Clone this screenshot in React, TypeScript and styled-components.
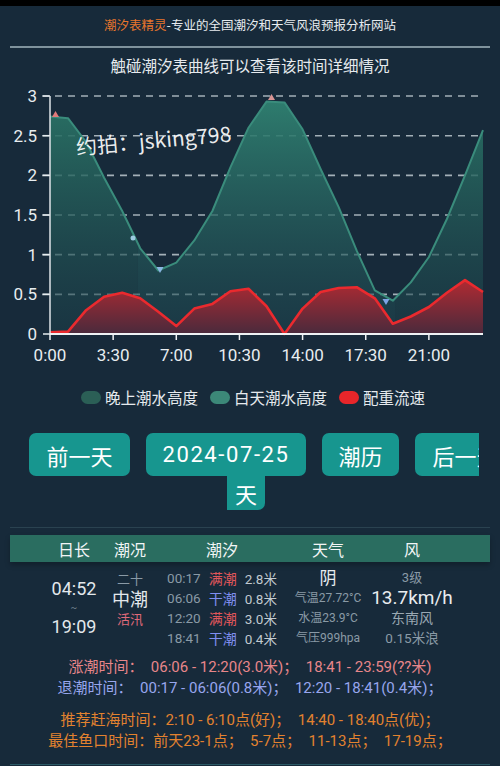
import React from "react";
import styled, { createGlobalStyle } from "styled-components";

const GlobalStyle = createGlobalStyle`
  html, body {
    margin: 0;
    padding: 0;
    background: #172a3a;
  }
  body {
    font-family: Roboto, "Noto Sans CJK SC", sans-serif;
  }
`;

// STYLED COMPONENTS
const Page = styled.div`
  width: 500px;
  height: 766px;
  overflow: hidden;
  background: #172a3a;
  color: #e3e8ec;
  display: flex;
  flex-direction: column;
`;

const TopStrip = styled.div`
  height: 6px;
  flex-shrink: 0;
  background: #000;
`;

const SiteHeader = styled.div`
  height: 38px;
  line-height: 38px;
  text-align: center;
  font-size: 12.5px;
  color: #e8ecef;
  font-family: "Noto Sans CJK SC", sans-serif;

  span {
    color: #e8762c;
  }
`;

const Divider = styled.div`
  height: 2px;
  margin: 2px 10px 0;
  background: #7f929c;
`;

const ChartTitle = styled.div`
  height: 34px;
  line-height: 34px;
  text-align: center;
  font-size: 15.5px;
  color: #e6eaee;
  font-family: "Noto Sans CJK SC", sans-serif;
`;

const ChartWrap = styled.div`
  position: relative;
  height: 288px;
`;

const Watermark = styled.div`
  position: absolute;
  left: 76px;
  top: 49px;
  font-size: 21px;
  color: rgba(255, 255, 255, 0.92);
  transform: rotate(-5deg);
  transform-origin: left center;
  font-family: "Noto Sans CJK SC", sans-serif;
  white-space: nowrap;
`;

const Legend = styled.div`
  margin-top: 15px;
  height: 24px;
  display: flex;
  justify-content: center;
  align-items: center;
  gap: 12px;
  padding-left: 6px;
`;

const LegendItem = styled.div`
  display: flex;
  align-items: center;
  gap: 4px;
  font-size: 15.5px;
  color: #e6eaee;
  font-family: "Noto Sans CJK SC", sans-serif;
`;

const Swatch = styled.span<{ $color: string }>`
  width: 20px;
  height: 13px;
  border-radius: 7px;
  background: ${(p) => p.$color};
`;

const ButtonRow = styled.div`
  margin-top: 24px;
  width: 479px;
  overflow: hidden;
  display: flex;
  align-items: flex-start;
  gap: 16px;
  padding-left: 29px;
  box-sizing: border-box;
`;

const NavButton = styled.div<{ $w: number; $spacing?: number }>`
  flex-shrink: 0;
  width: ${(p) => p.$w}px;
  height: 43px;
  border-radius: 7px;
  background: #17968f;
  color: #fff;
  font-size: 22px;
  letter-spacing: ${(p) => p.$spacing ?? 0}px;
  display: flex;
  align-items: center;
  justify-content: center;
  font-family: Roboto, "Noto Sans CJK SC", sans-serif;
`;

const DateGroup = styled.div`
  flex-shrink: 0;
  display: flex;
  flex-direction: column;
`;

const DateTail = styled.div`
  margin-left: 81px;
  width: 38px;
  height: 34px;
  background: #17968f;
  border-radius: 0 0 7px 0;
  color: #fff;
  font-size: 22px;
  display: flex;
  align-items: center;
  justify-content: center;
  font-family: "Noto Sans CJK SC", sans-serif;
`;

const FaintLine = styled.div`
  margin: 17px 10px 0;
  height: 1px;
  background: #2a4250;
`;

const cols = "72px 40px 144px 68px 100px";

const TableHead = styled.div`
  margin: 7px 10px 0;
  height: 27px;
  padding-left: 28px;
  background: #2a6d60;
  display: grid;
  grid-template-columns: ${cols};
  align-items: center;
  box-shadow: 0 3px 5px rgba(0, 0, 0, 0.25);
  font-size: 16px;
  color: #f2f5f6;
  font-family: "Noto Sans CJK SC", sans-serif;

  div {
    text-align: center;
  }
`;

const TableBody = styled.div`
  margin: 6px 10px 0;
  height: 80px;
  padding-left: 28px;
  display: grid;
  grid-template-columns: ${cols};
`;

const Cell = styled.div<{ $center?: boolean; $pad?: number }>`
  display: flex;
  flex-direction: column;
  align-items: center;
  padding-top: ${(p) => p.$pad ?? 0}px;
  justify-content: ${(p) => (p.$center ? "center" : "flex-start")};
`;

const Line = styled.div<{ $size?: number; $color?: string; $h?: number }>`
  height: ${(p) => p.$h ?? 20}px;
  line-height: ${(p) => p.$h ?? 20}px;
  font-size: ${(p) => p.$size ?? 13}px;
  color: ${(p) => p.$color ?? "#8a9aa6"};
  white-space: nowrap;
`;

const TideRow = styled.div`
  height: 20px;
  display: flex;
  align-items: center;
  gap: 8px;
  white-space: nowrap;
`;

const TideTime = styled.span`
  font-size: 13.5px;
  color: #8a9aa6;
`;

const TideKind = styled.span<{ $high: boolean }>`
  font-size: 14px;
  color: ${(p) => (p.$high ? "#e0565a" : "#7f8ef0")};
`;

const TideValue = styled.span`
  font-size: 13.5px;
  color: #c0c9cf;
`;

const InfoBlock = styled.div<{ $top: number }>`
  margin-top: ${(p) => p.$top}px;
  display: flex;
  flex-direction: column;
  align-items: center;
`;

const InfoLine = styled.div<{ $color: string }>`
  height: 21px;
  line-height: 21px;
  font-size: 15px;
  color: ${(p) => p.$color};
  white-space: pre;
`;

const BottomLine = styled.div`
  margin: 12px 10px 0;
  height: 1px;
  background: #2c5a66;
`;

// CHART DATA
const tide = [
  2.74, 2.72, 2.42, 1.97, 1.55, 1.08, 0.8, 0.9, 1.18, 1.55, 2.1, 2.6, 2.93,
  2.92, 2.58, 2.08, 1.6, 1.05, 0.55, 0.42, 0.65, 0.97, 1.45, 2.0, 2.57,
];
const flow = [
  0.02, 0.03, 0.3, 0.47, 0.52, 0.45, 0.28, 0.1, 0.32, 0.38, 0.54, 0.57, 0.35,
  0.0, 0.32, 0.53, 0.58, 0.59, 0.45, 0.13, 0.22, 0.34, 0.52, 0.68, 0.53,
];

const X0 = 50;
const X1 = 483;
const Y0 = 334;
const UNIT = 79.33;
const px = (h: number) => X0 + ((X1 - X0) / 24) * h;
const py = (v: number) => Y0 - v * UNIT;

const linePath = (vals: number[]) =>
  vals.map((v, i) => `${i ? "L" : "M"}${px(i).toFixed(1)},${py(v).toFixed(1)}`).join(" ");
const areaPath = (vals: number[]) => `${linePath(vals)} L${X1},${Y0} L${X0},${Y0} Z`;

const xLabels = ["0:00", "3:30", "7:00", "10:30", "14:00", "17:30", "21:00"];
const yLabels = ["0", "0.5", "1", "1.5", "2", "2.5", "3"];

function TideChart() {
  const sunrise = px(4 + 52 / 60);
  const sunset = px(19 + 9 / 60);
  return (
    <svg width="500" height="288" viewBox="0 82 500 288" style={{ display: "block" }}>
      <defs>
        <linearGradient id="dayFill" x1="0" y1="0" x2="0" y2="1">
          <stop offset="0" stopColor="#2f8070" stopOpacity="0.95" />
          <stop offset="1" stopColor="#1e4650" stopOpacity="0.5" />
        </linearGradient>
        <linearGradient id="nightFill" x1="0" y1="0" x2="0" y2="1">
          <stop offset="0" stopColor="#2a7466" stopOpacity="0.95" />
          <stop offset="1" stopColor="#1c404a" stopOpacity="0.5" />
        </linearGradient>
        <linearGradient id="flowFill" x1="0" y1="270" x2="0" y2="334" gradientUnits="userSpaceOnUse">
          <stop offset="0" stopColor="#c42a30" />
          <stop offset="1" stopColor="#4a2a3c" />
        </linearGradient>
        <clipPath id="dayClip">
          <rect x={sunrise} y="80" width={sunset - sunrise} height="260" />
        </clipPath>
        <clipPath id="nightClip">
          <rect x="40" y="80" width={sunrise - 40} height="260" />
          <rect x={sunset} y="80" width={500 - sunset} height="260" />
        </clipPath>
      </defs>

      {yLabels.map((l, i) => {
        const y = py(i * 0.5);
        return (
          <g key={l}>
            {i > 0 && (
              <line x1="42" x2={X1} y1={y} y2={y} stroke="#c8d2d8" strokeWidth="1.6" strokeDasharray="7 6" opacity="0.8" />
            )}
            <line x1="43" x2={X0} y1={y} y2={y} stroke="#e6ecef" strokeWidth="1.5" />
            <text x="37" y={y + 6} textAnchor="end" fontSize="17" fill="#e8edf0" fontFamily="Roboto, sans-serif">
              {l}
            </text>
          </g>
        );
      })}

      <path d={areaPath(tide)} fill="url(#dayFill)" clipPath="url(#dayClip)" />
      <path d={areaPath(tide)} fill="url(#nightFill)" clipPath="url(#nightClip)" />
      <path d={linePath(tide)} fill="none" stroke="#3a8c7c" strokeWidth="2" strokeLinejoin="round" />

      <path d={areaPath(flow)} fill="url(#flowFill)" />
      <path d={linePath(flow)} fill="none" stroke="#ea2a2e" strokeWidth="2.6" strokeLinejoin="round" />

      <line x1={X0} x2={X0} y1={py(3)} y2={Y0} stroke="#dfe5e9" strokeWidth="1.5" />
      <line x1={X0} x2={X1} y1={Y0} y2={Y0} stroke="#eef2f4" strokeWidth="2" />

      {xLabels.map((l, i) => {
        const x = px(i * 3.5);
        return (
          <g key={l}>
            <line x1={x} x2={x} y1={Y0} y2={Y0 + 6} stroke="#eef2f4" strokeWidth="1.5" />
            <text x={x} y="361" textAnchor="middle" fontSize="17" fill="#e8edf0" fontFamily="Roboto, sans-serif">
              {l}
            </text>
          </g>
        );
      })}

      <polygon points="52,117 55.5,111 59,117" fill="#e07a7a" />
      <polygon points="268,100 271.5,94 275,100" fill="#d89494" />
      <polygon points="156.5,267 163.5,267 160,273" fill="#8ab6e2" />
      <polygon points="382.5,299 389.5,299 386,305" fill="#7ea4e4" />
      <circle cx="133" cy="238" r="2.5" fill="#9ccae2" />
    </svg>
  );
}

const tides = [
  { time: "00:17", high: true, value: "2.8米" },
  { time: "06:06", high: false, value: "0.8米" },
  { time: "12:20", high: true, value: "3.0米" },
  { time: "18:41", high: false, value: "0.4米" },
];

export default function App() {
  return (
    <Page>
      <GlobalStyle />
      <TopStrip />
      <SiteHeader>
        <span>潮汐表精灵</span>-专业的全国潮汐和天气风浪预报分析网站
      </SiteHeader>
      <Divider />
      <ChartTitle>触碰潮汐表曲线可以查看该时间详细情况</ChartTitle>

      <ChartWrap>
        <TideChart />
        <Watermark>约拍：jsking798</Watermark>
      </ChartWrap>

      <Legend>
        <LegendItem>
          <Swatch $color="#2b5f56" />
          晚上潮水高度
        </LegendItem>
        <LegendItem>
          <Swatch $color="#3c8878" />
          白天潮水高度
        </LegendItem>
        <LegendItem>
          <Swatch $color="#e8262a" />
          配重流速
        </LegendItem>
      </Legend>

      <ButtonRow>
        <NavButton $w={101}>前一天</NavButton>
        <DateGroup>
          <NavButton $w={160} $spacing={1.6}>2024-07-25</NavButton>
          <DateTail>天</DateTail>
        </DateGroup>
        <NavButton $w={77}>潮历</NavButton>
        <NavButton $w={101}>后一天</NavButton>
      </ButtonRow>

      <FaintLine />

      <TableHead>
        <div>日长</div>
        <div>潮况</div>
        <div>潮汐</div>
        <div>天气</div>
        <div>风</div>
      </TableHead>

      <TableBody>
        <Cell $center>
          <Line $size={18} $h={22} $color="#e3e8ec">04:52</Line>
          <Line $size={10} $h={16} $color="#6f808c">~</Line>
          <Line $size={18} $h={22} $color="#e3e8ec">19:09</Line>
        </Cell>
        <Cell $pad={2}>
          <Line $size={13}>二十</Line>
          <Line $size={18} $color="#e3e8ec">中潮</Line>
          <Line $size={13} $color="#e06a7a">活汛</Line>
        </Cell>
        <Cell>
          {tides.map((t) => (
            <TideRow key={t.time}>
              <TideTime>{t.time}</TideTime>
              <TideKind $high={t.high}>{t.high ? "满潮" : "干潮"}</TideKind>
              <TideValue>{t.value}</TideValue>
            </TideRow>
          ))}
        </Cell>
        <Cell>
          <Line $size={17} $color="#e8ecef">阴</Line>
          <Line $size={12}>气温27.72°C</Line>
          <Line $size={12}>水温23.9°C</Line>
          <Line $size={12}>气压999hpa</Line>
        </Cell>
        <Cell>
          <Line $size={13}>3级</Line>
          <Line $size={19} $color="#e8ecef">13.7km/h</Line>
          <Line $size={14} $color="#9aa8b2">东南风</Line>
          <Line $size={13.5}>0.15米浪</Line>
        </Cell>
      </TableBody>

      <InfoBlock $top={9}>
        <InfoLine $color="#e8868a">涨潮时间：  06:06 - 12:20(3.0米)；  18:41 - 23:59(??米)</InfoLine>
        <InfoLine $color="#98a6ee">退潮时间：  00:17 - 06:06(0.8米)；  12:20 - 18:41(0.4米)；</InfoLine>
      </InfoBlock>
      <InfoBlock $top={11}>
        <InfoLine $color="#e2822f">推荐赶海时间：2:10 - 6:10点(好)；  14:40 - 18:40点(优)；</InfoLine>
        <InfoLine $color="#e2822f">最佳鱼口时间：前天23-1点；  5-7点；  11-13点；  17-19点；</InfoLine>
      </InfoBlock>

      <BottomLine />
    </Page>
  );
}
